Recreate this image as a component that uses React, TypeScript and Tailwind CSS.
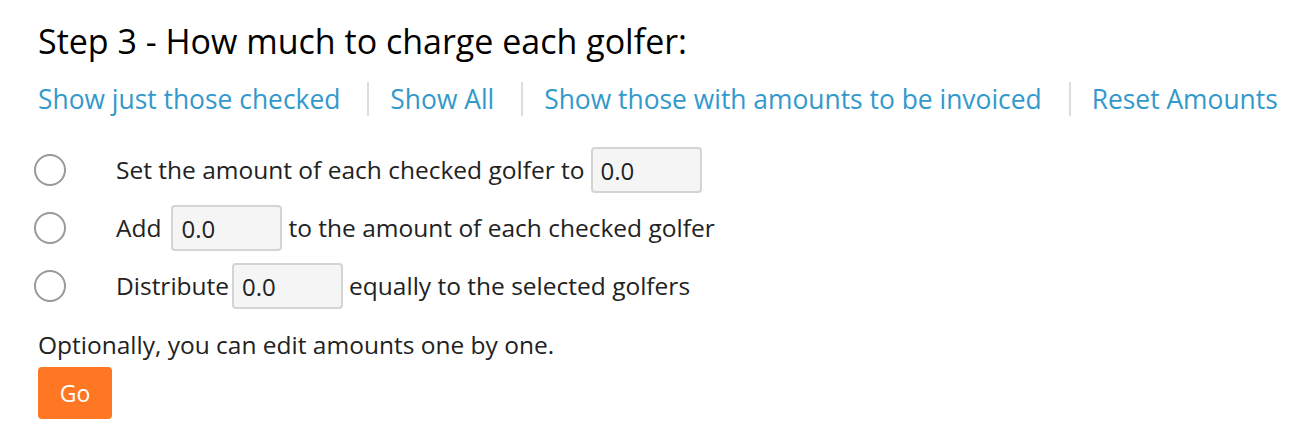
export default function App() {
  const links = [
    'Show just those checked',
    'Show All',
    'Show those with amounts to be invoiced',
    'Reset Amounts',
  ]

  return (
    <main className="min-h-screen bg-white pl-[38px] pt-[19px] text-[#222] font-['Open_Sans',sans-serif]">
      {/* Heading */}
      <h2 className="text-[34px] leading-[44px] text-black">Step 3 - How much to charge each golfer:</h2>

      {/* Filter links */}
      <div className="mt-[19px] flex items-center">
        {links.map((l, i) => (
          <div key={l} className="flex items-center">
            {i > 0 && <span className="ml-[27px] mr-[21px] h-[34px] w-[2px] bg-[#dddddd]" />}
            <a href="#" className="text-[26.4px] leading-[34px] text-[#3399cc]">{l}</a>
          </div>
        ))}
      </div>

      {/* Options */}
      <div className="mt-[31px] flex flex-col gap-[12px] text-[24.5px]">
        <div className="flex h-[46px] items-center">
          <span className="ml-[-4px] h-[32px] w-[32px] rounded-full border-2 border-[#999]" />
          <span className="ml-[50px]">Set the amount of each checked golfer to</span>
          <input className="ml-[6px] h-[46px] w-[111px] rounded-[4px] border-2 border-[#d4d4d4] bg-[#f5f5f5] px-[8px] text-[24px] text-[#222]" defaultValue="0.0" />
        </div>
        <div className="flex h-[46px] items-center">
          <span className="ml-[-4px] h-[32px] w-[32px] rounded-full border-2 border-[#999]" />
          <span className="ml-[50px]">Add</span>
          <input className="ml-[10px] h-[46px] w-[111px] rounded-[4px] border-2 border-[#d4d4d4] bg-[#f5f5f5] px-[8px] text-[24px] text-[#222]" defaultValue="0.0" />
          <span className="ml-[6px]">to the amount of each checked golfer</span>
        </div>
        <div className="flex h-[46px] items-center">
          <span className="ml-[-4px] h-[32px] w-[32px] rounded-full border-2 border-[#999]" />
          <span className="ml-[50px]">Distribute</span>
          <input className="ml-[3px] h-[46px] w-[111px] rounded-[4px] border-2 border-[#d4d4d4] bg-[#f5f5f5] px-[8px] text-[24px] text-[#222]" defaultValue="0.0" />
          <span className="ml-[6px]">equally to the selected golfers</span>
        </div>
      </div>

      <p className="mt-[19px] text-[24.5px] leading-[34px]">Optionally, you can edit amounts one by one.</p>
      <button className="mt-[5px] h-[52px] w-[74px] rounded-[4px] bg-[#ff7722] text-[23px] text-white">Go</button>
    </main>
  )
}
